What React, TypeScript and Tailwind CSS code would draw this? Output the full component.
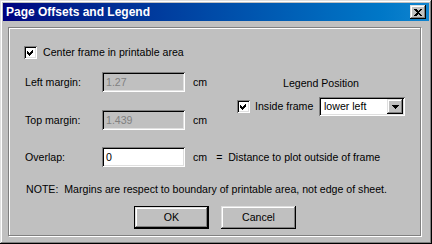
const raised =
  "shadow-[inset_-1px_-1px_#000,inset_1px_1px_#dfdfdf,inset_-2px_-2px_#808080,inset_2px_2px_#fff]";
const sunken =
  "shadow-[inset_1px_1px_#808080,inset_-1px_-1px_#fff,inset_2px_2px_#000,inset_-2px_-2px_#dfdfdf]";

function CheckBox() {
  return (
    <div className={`w-[13px] h-[13px] bg-white shrink-0 ${sunken}`}>
      <svg width="13" height="13" viewBox="0 0 13 13" shapeRendering="crispEdges">
        <path d="M3 5 L5 7 L9 3 L9 6 L5 10 L3 8 Z" fill="#000" />
      </svg>
    </div>
  );
}

function MarginRow({ label, value }: { label: string; value: string }) {
  return (
    <div className="flex items-center h-[20px]">
      <span className="w-[77px]">{label}</span>
      <div
        className={`w-[83px] h-[20px] flex items-center pl-[4px] text-[#808080] ${sunken}`}
      >
        {value}
      </div>
      <span className="ml-[8px]">cm</span>
    </div>
  );
}

export default function App() {
  return (
    <div
      className={`w-[432px] h-[244px] bg-[#c0c0c0] p-[3px] flex flex-col text-[10.6px] leading-[13px] text-black font-['Liberation_Sans',Arial,sans-serif] ${raised}`}
    >
      {/* title bar */}
      <div className="h-[18px] bg-linear-to-r from-[#000080] to-[#1084d0] flex items-center justify-between pl-[3px] pr-[3px]">
        <span className="text-white font-bold text-[12px]">Page Offsets and Legend</span>
        <div className={`w-[16px] h-[14px] bg-[#c0c0c0] flex items-center justify-center ${raised}`}>
          <svg width="8" height="7" viewBox="0 0 8 7" shapeRendering="crispEdges">
            <path d="M0 0 H2 L4 2 L6 0 H8 L5 3.5 L8 7 H6 L4 5 L2 7 H0 L3 3.5 Z" fill="#000" />
          </svg>
        </div>
      </div>

      {/* group box */}
      <div className="mt-[6px] ml-[5px] w-[413px] h-[209px] border border-[#808080] shadow-[1px_1px_0_#fff,inset_1px_1px_0_#fff] flex flex-col">
        <div className="flex items-center h-[13px] mt-[18px] ml-[15px]">
          <CheckBox />
          <span className="ml-[6px]">Center frame in printable area</span>
        </div>

        <div className="flex mt-[13px] ml-[16px]">
          <div className="flex flex-col gap-[18px] w-[212px]">
            <MarginRow label="Left margin:" value="1.27" />
            <MarginRow label="Top margin:" value="1.439" />
          </div>
          <div className="flex flex-col w-[168px]">
            <div className="mt-[5px] text-center">Legend Position</div>
            <div className="flex items-center mt-[7px] h-[19px]">
              <CheckBox />
              <span className="ml-[5px] w-[64px]">Inside frame</span>
              <div className={`w-[86px] h-[19px] bg-white flex items-center justify-between p-[2px] ${sunken}`}>
                <span className="pl-[3px]">lower left</span>
                <div className={`w-[16px] h-[15px] bg-[#c0c0c0] flex items-center justify-center ${raised}`}>
                  <svg width="7" height="4" viewBox="0 0 7 4" shapeRendering="crispEdges">
                    <path d="M0 0 H7 L3.5 4 Z" fill="#000" />
                  </svg>
                </div>
              </div>
            </div>
          </div>
        </div>

        <div className="flex items-center h-[20px] mt-[17px] ml-[16px]">
          <span className="w-[77px]">Overlap:</span>
          <div className={`w-[83px] h-[20px] bg-white flex items-center pl-[4px] ${sunken}`}>0</div>
          <span className="ml-[8px]">cm</span>
          <span className="ml-[9px] whitespace-pre">=  Distance to plot outside of frame</span>
        </div>

        <div className="mt-[16px] ml-[17px] h-[13px] whitespace-pre">
          NOTE:  Margins are respect to boundary of printable area, not edge of sheet.
        </div>

        <div className="flex mt-[10px] ml-[125px] gap-[12px]">
          <div className="w-[75px] h-[23px] border border-black">
            <div className={`w-full h-full flex items-center justify-center ${raised}`}>OK</div>
          </div>
          <div className={`w-[75px] h-[23px] flex items-center justify-center ${raised}`}>Cancel</div>
        </div>
      </div>
    </div>
  );
}
